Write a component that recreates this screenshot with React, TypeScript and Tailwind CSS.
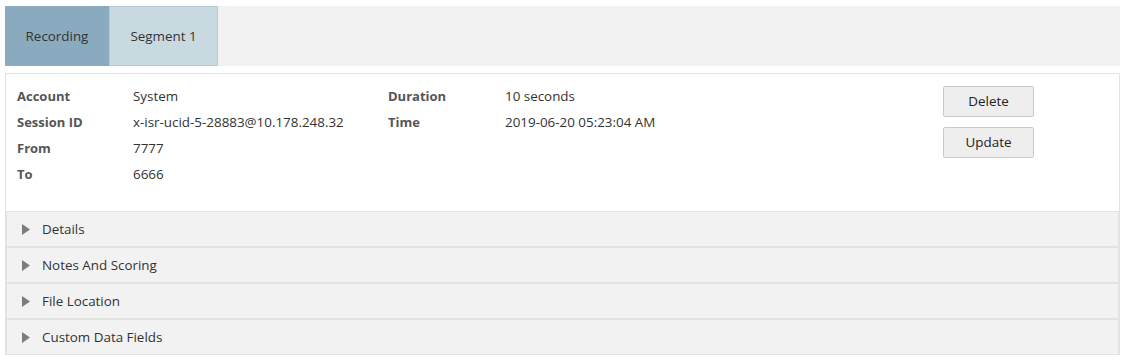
import React from "react";

const font = { fontFamily: '"Open Sans", "Noto Sans", sans-serif' };

function Row({ label, value }: { label: string; value: string }) {
  return (
    <>
      <div className="font-bold text-[#555555] h-[26px] leading-[26px]">{label}</div>
      <div className="text-[#333333] h-[26px] leading-[26px] text-[13.4px]">{value}</div>
    </>
  );
}

function Section({ title }: { title: string }) {
  return (
    <div className="h-[36px] border border-[#e3e3e3] bg-[#f2f2f2] flex items-center pl-[15px] text-[#333333] text-[13.4px]">
      <svg width="8" height="11" viewBox="0 0 8 11" className="mr-[12px]">
        <path d="M0 0 L8 5.5 L0 11 Z" fill="#7d7d7d" />
      </svg>
      <span>{title}</span>
    </div>
  );
}

export default function App() {
  return (
    <div className="w-[1125px] h-[361px] bg-white text-[13px]" style={font}>
      <div className="pt-[6px] px-[5px]">
        <div className="flex h-[60px] bg-[#f2f2f2] w-[1115px]">
          <div className="w-[104px] bg-[#8aabbf] flex items-center justify-center text-[#333333] text-[13.4px]">Recording</div>
          <div className="w-[109px] bg-[#c9d9e0] border border-[#b9ccd6] flex items-center justify-center text-[#333333] text-[13.4px]">Segment 1</div>
        </div>
      </div>
      <div className="mt-[7px] ml-[5px] w-[1115px] border border-[#e2e2e2] border-b-0">
        <div className="h-[137px] flex pt-[9px] pl-[11px]">
          <div className="grid grid-cols-[116px_255px] content-start">
            <Row label="Account" value="System" />
            <Row label="Session ID" value="x-isr-ucid-5-28883@10.178.248.32" />
            <Row label="From" value="7777" />
            <Row label="To" value="6666" />
          </div>
          <div className="grid grid-cols-[117px_200px] content-start">
            <Row label="Duration" value="10 seconds" />
            <Row label="Time" value="2019-06-20 05:23:04 AM" />
          </div>
          <div className="ml-auto mr-[85px] pt-[3px] flex flex-col gap-[10px]">
            <button className="w-[91px] h-[31px] bg-[#eeeeee] border border-[#cacaca] rounded-[2px] text-[#222222] text-[13.4px]">Delete</button>
            <button className="w-[91px] h-[31px] bg-[#eeeeee] border border-[#cacaca] rounded-[2px] text-[#222222] text-[13.4px]">Update</button>
          </div>
        </div>
        <div className="flex flex-col">
          <Section title="Details" />
          <Section title="Notes And Scoring" />
          <Section title="File Location" />
          <Section title="Custom Data Fields" />
        </div>
      </div>
    </div>
  );
}
